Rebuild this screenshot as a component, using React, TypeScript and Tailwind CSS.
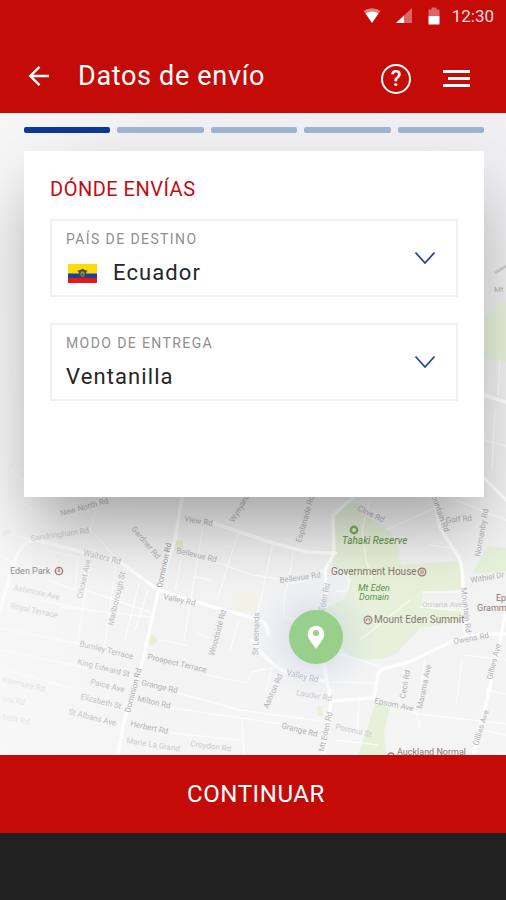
import React, { useState } from 'react';

interface MapLabel {
  text: string;
  x: number;
  y: number;
  angle: number;
  tone?: 'dark' | 'light';
}

const streets: MapLabel[] = [
  { text: 'New North Rd', x: 61, y: 516, angle: -15, tone: 'dark' },
  { text: 'Sandringham Rd', x: 31, y: 541, angle: -8 },
  { text: 'Walters Rd', x: 83, y: 555, angle: 14 },
  { text: 'Cricket Ave', x: 82, y: 599, angle: -77 },
  { text: 'Ashmore Ave', x: 13, y: 590, angle: 12 },
  { text: 'Royal Terrace', x: 10, y: 608, angle: 12 },
  { text: 'Marlborough St', x: 113, y: 626, angle: -77 },
  { text: 'Gardner Rd', x: 131, y: 529, angle: 50 },
  { text: 'Dominion Rd', x: 162, y: 588, angle: -78, tone: 'dark' },
  { text: 'Dominion Rd', x: 130, y: 713, angle: -75, tone: 'dark' },
  { text: 'Burnley Terrace', x: 79, y: 646, angle: 14 },
  { text: 'King Edward St', x: 77, y: 664, angle: 14 },
  { text: 'Paice Ave', x: 90, y: 684, angle: 14 },
  { text: 'Elizabeth St', x: 80, y: 699, angle: 14 },
  { text: 'St Albans Ave', x: 68, y: 714, angle: 14 },
  { text: 'Prospect Terrace', x: 147, y: 659, angle: 13 },
  { text: 'Grange Rd', x: 141, y: 685, angle: 13 },
  { text: 'Milton Rd', x: 137, y: 701, angle: 13 },
  { text: 'Herbert Rd', x: 130, y: 726, angle: 12 },
  { text: 'Marie La Grand', x: 126, y: 743, angle: 9, tone: 'light' },
  { text: 'Kenmure Rd', x: 2, y: 682, angle: 13, tone: 'light' },
  { text: 'ora Rd', x: 2, y: 701, angle: 10, tone: 'light' },
  { text: 'beth Rd', x: 2, y: 719, angle: 12, tone: 'light' },
  { text: 'go', x: 2, y: 535, angle: -8, tone: 'light' },
  { text: 'View Rd', x: 184, y: 521, angle: 10 },
  { text: 'Bellevue Rd', x: 176, y: 553, angle: 13 },
  { text: 'Bellevue Rd', x: 280, y: 583, angle: -8 },
  { text: 'Valley Rd', x: 163, y: 599, angle: 12 },
  { text: 'Wynyard Rd', x: 234, y: 523, angle: -60 },
  { text: 'Esplanade Rd', x: 301, y: 543, angle: -74 },
  { text: 'Woodside Rd', x: 214, y: 656, angle: -75 },
  { text: 'St Leonards', x: 258, y: 655, angle: -88 },
  { text: 'Valley Rd', x: 286, y: 675, angle: 13 },
  { text: 'Ashton Rd', x: 268, y: 709, angle: -66 },
  { text: 'Lauder Rd', x: 296, y: 695, angle: 10, tone: 'light' },
  { text: 'Grange Rd', x: 281, y: 728, angle: 14 },
  { text: 'Croydon Rd', x: 190, y: 746, angle: 8, tone: 'light' },
  { text: 'Eden Rd', x: 324, y: 612, angle: -78 },
  { text: 'Clive Rd', x: 357, y: 510, angle: 26 },
  { text: 'Omana Ave', x: 422, y: 607, angle: 0, tone: 'light' },
  { text: 'Mountain Rd', x: 429, y: 490, angle: 70 },
  { text: 'Golf Rd', x: 446, y: 523, angle: -5 },
  { text: 'Normanby Rd', x: 480, y: 557, angle: -80 },
  { text: 'Withiel Dr', x: 471, y: 583, angle: -10 },
  { text: 'Mountain Rd', x: 461, y: 588, angle: 84 },
  { text: 'Owens Rd', x: 454, y: 644, angle: -10 },
  { text: 'Gillies Ave', x: 492, y: 680, angle: -76 },
  { text: 'Gillies Ave', x: 478, y: 746, angle: -73 },
  { text: 'Cecil Rd', x: 405, y: 699, angle: -80 },
  { text: 'Marama Ave', x: 422, y: 709, angle: -78 },
  { text: 'Epsom Ave', x: 374, y: 703, angle: 12 },
  { text: 'Poronui St', x: 335, y: 729, angle: 13, tone: 'light' },
  { text: 'Mt Eden Rd', x: 324, y: 752, angle: -78 },
  { text: 'Mt', x: 494, y: 292, angle: 0 },
];

const mainRoads = [
  'M182 497 L175 540 L158 592 L143 660 L123 725 L117 760',
  'M0 610 L14 562 Q22 540 36 540 L82 552 L120 562 L158 590 L200 603 L257 619 Q268 622 268 634',
  'M252 640 Q262 658 285 672 L327 682',
  'M213 523 L273 543 L307 552 L336 553',
  'M326 595 L325 570 L334 553 L333 515 L353 498',
  'M322 655 L327 680 L331 701 L323 760',
  'M331 701 L374 698 L378 674 Q380 669 387 668 L409 662 L453 641 L480 634 L506 634',
  'M432 490 L440 528 L458 556 Q463 565 463 590 L466 641',
  'M506 612 L500 640 L487 700 L472 760',
  'M484 395 L506 402',
  'M484 478 L506 500',
];

const minorRoads = [
  'M48 551 L78 557 L75 590 L48 580',
  'M100 497 L90 530 L120 562',
  'M0 628 L60 640 L90 646 M0 650 L88 668 M0 668 L70 688',
  'M90 562 L78 640 M116 566 L104 648 M139 583 L125 640 M148 590 L135 630',
  'M60 607 L150 617 M85 590 L150 612 M40 600 L90 610',
  'M45 520 L20 500 M0 556 L14 562',
  'M238 533 L217 600 M273 543 L257 616 M203 527 L184 640 M181 560 L175 590',
  'M215 562 L253 575 L280 579 Q300 590 322 570',
  'M195 577 L211 580 M196 633 L210 638 M238 622 L230 652',
  'M160 640 L186 645 M207 675 L247 683 L252 672 L272 668 L266 690',
  'M178 693 L240 710 L327 722 M172 708 L282 724 M170 733 L240 740',
  'M293 552 L290 575 Q282 600 284 617 L318 622',
  'M242 722 L244 756 M257 619 Q272 624 270 637',
  'M318 660 L331 690 M326 650 L380 666 M331 682 L378 683',
  'M359 702 L357 735 M375 700 L420 714 L506 724',
  'M425 660 L418 707 M405 664 L400 700 M462 660 L456 705 M415 707 L420 726',
  'M464 655 L506 660 M486 690 L506 694 M480 730 L506 735',
  'M386 530 L435 508 M430 545 L450 548 M456 500 L506 520',
  'M370 500 L362 530 L366 560 L372 580 M336 590 Q352 598 348 575',
  'M422 592 L462 592 M420 607 L463 611 M360 640 L410 600 M335 740 L378 745',
  'M495 410 L492 470 M500 360 L498 395 M484 440 L506 446',
  'M12 470 L40 497 M0 530 L30 540',
];

const toneColors = {
  dark: '#9c9ca0',
  normal: '#b2b2b5',
  light: '#cbcbce',
};

function CityMap() {
  return (
    <svg
      className="absolute inset-0 h-full w-full"
      viewBox="0 113 506 642"
      preserveAspectRatio="xMidYMid slice"
      role="img"
      aria-label="Mapa de puntos de entrega"
    >
      <defs>
        <linearGradient id="land" x1="0" y1="0" x2="0" y2="1">
          <stop offset="0" stopColor="#f0f0f2" />
          <stop offset="0.2" stopColor="#ededef" />
          <stop offset="1" stopColor="#f5f5f5" />
        </linearGradient>
        <linearGradient id="fade" x1="0" y1="0" x2="1" y2="0">
          <stop offset="0" stopColor="#fafafa" stopOpacity="0.6" />
          <stop offset="0.3" stopColor="#fafafa" stopOpacity="0" />
        </linearGradient>
        <radialGradient id="halo">
          <stop offset="0.3" stopColor="#b9c6d8" stopOpacity="0.4" />
          <stop offset="1" stopColor="#dfe5ee" stopOpacity="0" />
        </radialGradient>
      </defs>

      <rect x="0" y="113" width="506" height="642" fill="url(#land)" />

      {/* parks */}
      <g fill="#e7f1da">
        <path d="M333 515 L353 500 L369 518 L389 530 L398 547 L401 565 L459 561 L462 590 L423 592 L421 607 L462 611 L460 622 L420 628 L398 652 Q380 664 350 657 L336 640 L322 610 L345 599 L352 580 L333 565 Z" />
        <path d="M472 574 L488 546 L506 548 L506 571 Z" />
        <path d="M484 318 L506 300 L506 362 L484 358 Z" />
        <path d="M376 702 L390 708 L384 732 L386 755 L358 755 Z" />
        <circle cx="152" cy="640" r="5" />
      </g>
      <rect x="233" y="592" width="24" height="20" fill="#f3f2e9" />
      <rect x="175" y="540" width="8" height="9" fill="#ebebd6" />
      <rect x="317" y="706" width="6" height="10" fill="#f0f1dc" />

      <g fill="none" stroke="#ffffff" strokeLinejoin="round" strokeLinecap="round">
        {minorRoads.map((d) => (
          <path key={d} d={d} strokeWidth="1.5" strokeOpacity="0.65" />
        ))}
        {mainRoads.map((d) => (
          <path key={d} d={d} strokeWidth="3.5" strokeOpacity="0.9" />
        ))}
      </g>
      <path d="M495 273 L506 266" stroke="#cfcfd1" strokeWidth="3" />

      <g fontFamily="Roboto, sans-serif" fontSize="8">
        {streets.map(({ text, x, y, angle, tone }) => (
          <text
            key={`${text}-${x}-${y}`}
            transform={`translate(${x} ${y}) rotate(${angle})`}
            fill={toneColors[tone ?? 'normal']}
          >
            {text}
          </text>
        ))}
      </g>

      <rect x="0" y="113" width="506" height="642" fill="url(#fade)" />

      {/* places */}
      <g fontFamily="Roboto, sans-serif" fontSize="9" fill="#8a7672">
        <text x="10" y="574" fill="#908c8a">Eden Park</text>
        <text x="331" y="575" fontSize="10">Government House</text>
        <text x="374" y="623" fontSize="10">Mount Eden Summit</text>
        <text x="496" y="601">Ep</text>
        <text x="477" y="611">Gramm</text>
        <text x="397" y="755">Auckland Normal</text>
        <g fill="#5f8f4a" fontStyle="italic">
          <text x="342" y="544" fontSize="10">Tahaki Reserve</text>
          <text x="358" y="591">Mt Eden</text>
          <text x="359" y="600">Domain</text>
        </g>
      </g>
      <g fill="none" stroke="#a07c79" strokeWidth="1.4">
        <circle cx="59" cy="571" r="3.6" />
        <path d="M59 568 V572 M57.500 571 H60.500" strokeWidth="1" />
        <circle cx="422" cy="572" r="3.8" />
        <path d="M420 573 H424 M420 571 H424" strokeWidth="1" />
        <circle cx="368" cy="620" r="3.8" />
        <path d="M366.500 621.500 V619 H369.500 V621.500" strokeWidth="1" />
        <circle cx="391" cy="756" r="3" />
        <circle cx="354" cy="530" r="3.2" stroke="#7fae63" strokeWidth="2.4" />
      </g>

      <circle cx="316" cy="637" r="66" fill="url(#halo)" />
      <circle cx="316" cy="637" r="27" fill="#98cf8a" />
      <path
        d="M316 649 C313 644.500 307.700 639 307.700 634 A8.300 8.300 0 0 1 324.300 634 C324.300 639 319 644.500 316 649 Z"
        fill="#ffffff"
      />
      <circle cx="316" cy="633" r="3" fill="#98cf8a" />
    </svg>
  );
}

function StatusBar() {
  return (
    <div className="flex h-8 items-center justify-end pr-3 text-[17px] leading-5 text-[#fbdcdb]">
      <svg className="h-4 w-[18px]" viewBox="0 0 18 16" aria-hidden="true">
        <path d="M0.500 3 Q9 -2.500 17.500 3 L15 6 Q9 2.500 3 6 Z" fill="#e3807d" />
        <path d="M2.500 5.500 Q9 1.500 15.500 5.500 L9 15 Z" fill="#ffffff" />
      </svg>
      <svg className="ml-3.5 h-4 w-[17px]" viewBox="0 0 17 16" aria-hidden="true">
        <path d="M1 15 L17 0 V15 Z" fill="#db6663" />
        <path d="M1 15 L9 7.500 V15 Z" fill="#ffffff" />
      </svg>
      <svg className="ml-4 h-[18px] w-3" viewBox="0 0 12 18" aria-hidden="true">
        <path d="M3.500 0.500 H8.500 V2.500 H11.500 V9 H0.500 V2.500 H3.500 Z" fill="#db6663" />
        <path d="M0.500 9 H11.500 V17.500 H0.500 Z" fill="#ffffff" />
      </svg>
      <span className="ml-3">12:30</span>
    </div>
  );
}

function Header() {
  return (
    <header className="bg-[#c50b08] text-white">
      <StatusBar />
      <div className="flex h-[81px] items-center pt-1.5 pr-9 pl-7">
        <button type="button" aria-label="Volver">
          <svg className="h-[22px] w-[22px]" viewBox="0 0 22 22" fill="none" stroke="currentColor" strokeWidth="2.4">
            <path d="M21 11 H3 M11.500 1.800 L2.300 11 L11.500 20.200" />
          </svg>
        </button>
        <h1 className="ml-7 flex-1 text-[27px] leading-8 tracking-wide">Datos de envío</h1>
        <div className="flex items-center gap-8 pt-1.5">
          <button
            type="button"
            aria-label="Ayuda"
            className="flex h-[30px] w-[30px] items-center justify-center rounded-full border-2 border-white text-[22px] leading-6 font-medium"
          >
            ?
          </button>
          <button type="button" aria-label="Menú" className="flex flex-col items-end gap-1">
            <span className="h-[3px] w-[27px] bg-white" />
            <span className="h-[3px] w-[22px] bg-white" />
            <span className="h-[3px] w-[27px] bg-white" />
          </button>
        </div>
      </div>
    </header>
  );
}

function EcuadorFlag() {
  return (
    <svg className="mr-4 ml-0.5 h-[19px] w-[29px] shrink-0" viewBox="0 0 29 19" aria-hidden="true">
      <rect width="29" height="19" fill="#fbdc09" />
      <rect y="9.500" width="29" height="5" fill="#1b3f9c" />
      <rect y="14" width="29" height="5" fill="#e8151b" />
      <path d="M9.500 6.500 Q12 7 14.500 4.500 Q17 7 19.500 6.500 L18 9 V12.500 L14.500 14.500 L11 12.500 V9 Z" fill="#4b4a35" />
      <ellipse cx="14.500" cy="10" rx="2" ry="2.800" fill="#8a9a78" />
      <path d="M13 11.500 L14.500 9 L16 11.500 Z" fill="#2f4a55" />
    </svg>
  );
}

interface SelectFieldProps {
  id: string;
  label: string;
  options: string[];
  icon?: React.ReactNode;
}

function SelectField({ id, label, options, icon }: SelectFieldProps) {
  const [value, setValue] = useState(options[0]);

  return (
    <div className="relative border-2 border-[#f0f0f0] px-3.5 pt-2 pb-1.5">
      <label htmlFor={id} className="block text-sm leading-5 tracking-widest text-[#8f8f8f]">
        {label}
      </label>
      <div className="mt-2 flex items-center">
        {icon}
        <select
          id={id}
          value={value}
          onChange={(e) => setValue(e.target.value)}
          className="h-8 w-full appearance-none bg-transparent pr-12 text-[22px] leading-8 tracking-wider text-[#262626] outline-none"
        >
          {options.map((option) => (
            <option key={option}>{option}</option>
          ))}
        </select>
      </div>
      <svg
        className="pointer-events-none absolute inset-y-0 right-5 my-auto h-3.5 w-[22px]"
        viewBox="0 0 22 14"
        fill="none"
        stroke="#24459a"
        strokeWidth="1.800"
        aria-hidden="true"
      >
        <path d="M1.500 1.500 L11 12 L20.500 1.500" />
      </svg>
    </div>
  );
}

function ProgressSteps({ current, total }: { current: number; total: number }) {
  return (
    <div
      className="flex gap-[7px]"
      role="progressbar"
      aria-label="Progreso del envío"
      aria-valuenow={current}
      aria-valuemin={0}
      aria-valuemax={total}
    >
      {Array.from({ length: total }, (_, i) => (
        <div key={i} className={`h-1.5 flex-1 rounded-xs ${i < current ? 'bg-[#0b3895]' : 'bg-[#9eb3d1]'}`} />
      ))}
    </div>
  );
}

export default function App() {
  return (
    <div className="flex min-h-screen flex-col bg-[#212121] font-['Roboto',sans-serif]">
      <Header />

      <main className="relative flex-1 overflow-hidden bg-[#f3f3f4]">
        <CityMap />
        <div className="relative pt-3.5 pr-[22px] pl-6">
          <ProgressSteps current={1} total={5} />

          <section className="mt-[18px] bg-white px-[26px] pt-6 pb-24 shadow-[0_36px_60px_-8px_rgba(0,0,0,0.32)]">
            <h2 className="text-xl leading-7 tracking-wide text-[#c50b12]">DÓNDE ENVÍAS</h2>
            <div className="mt-4 space-y-[26px]">
              <SelectField
                id="country"
                label="PAÍS DE DESTINO"
                options={['Ecuador', 'Colombia', 'Perú']}
                icon={<EcuadorFlag />}
              />
              <SelectField
                id="delivery"
                label="MODO DE ENTREGA"
                options={['Ventanilla', 'Domicilio']}
              />
            </div>
          </section>
        </div>
      </main>

      <button type="button" className="h-[78px] w-full bg-[#c50b08] pl-1.5 text-2xl tracking-wide text-white">
        CONTINUAR
      </button>
      <div className="h-[67px]" />
    </div>
  );
}
